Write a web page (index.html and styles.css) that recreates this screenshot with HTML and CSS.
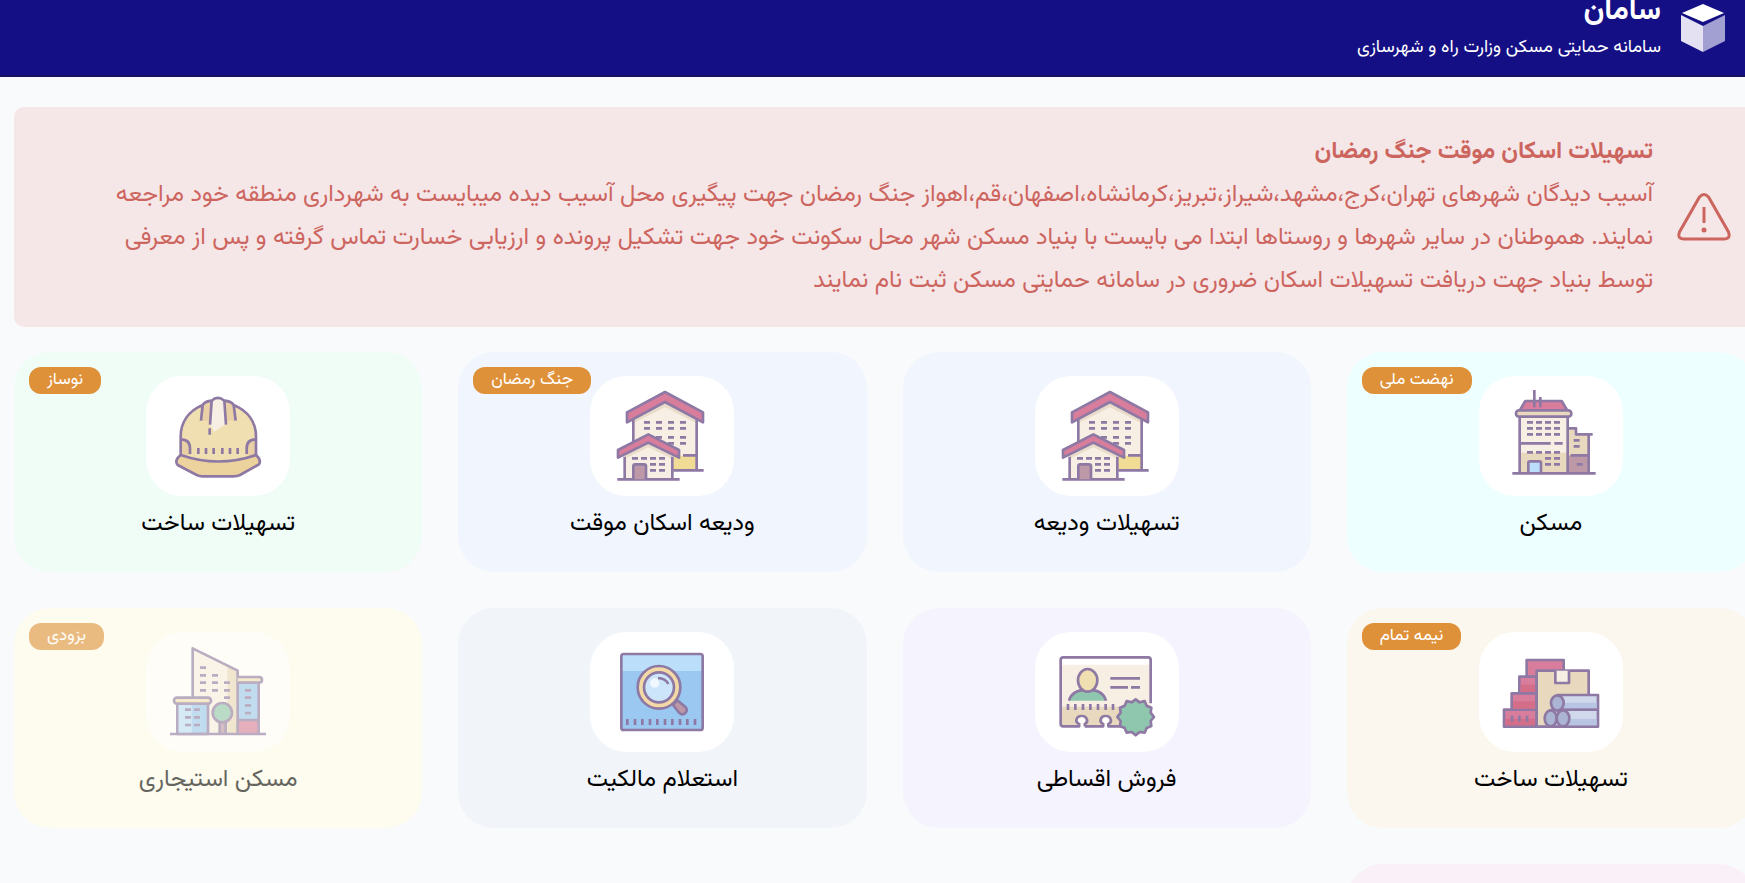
FILE: index.html
```html
<!DOCTYPE html>
<html lang="fa" dir="rtl">
<head>
  <meta charset="UTF-8">
  <meta name="viewport" content="width=device-width, initial-scale=1.0">
  <title>سامان</title>
  <link rel="stylesheet" href="styles.css">
</head>
<body>
  <header class="site-header">
    <svg class="logo" viewBox="0 0 44 48" aria-hidden="true">
      <path d="M22 0 43 9 22 18 1 9z" fill="#fff"/>
      <path d="M0 11 22 22V48L0 37z" fill="#e4e2f2"/>
      <path d="M44 11 22 22V48L44 37z" fill="#a29fd2"/>
    </svg>
    <div class="brand">
      <h1>سامان</h1>
      <p>سامانه حمایتی مسکن وزارت راه و شهرسازی</p>
    </div>
  </header>

  <main>
    <section class="notice">
      <svg class="notice-icon" viewBox="0 0 54 48" aria-hidden="true">
        <path d="M22.500 4Q27-1 31.500 4L51.500 39Q54 46 47 46H7Q0 46 2.500 39z" fill="none" stroke="currentColor" stroke-width="3"/>
        <path d="M27 14V30" stroke="currentColor" stroke-width="3"/>
        <circle cx="27" cy="37" r="2.500" fill="currentColor"/>
      </svg>
      <div class="notice-text">
        <h2>تسهیلات اسکان موقت جنگ رمضان</h2>
        <p>آسیب دیدگان شهرهای تهران،کرج،مشهد،شیراز،تبریز،کرمانشاه،اصفهان،قم،اهواز جنگ رمضان جهت پیگیری محل آسیب دیده میبایست به شهرداری منطقه خود مراجعه<br>
        نمایند. هموطنان در سایر شهرها و روستاها ابتدا می بایست با بنیاد مسکن شهر محل سکونت خود جهت تشکیل پرونده و ارزیابی خسارت تماس گرفته و پس از معرفی<br>
        توسط بنیاد جهت دریافت تسهیلات اسکان ضروری در سامانه حمایتی مسکن ثبت نام نمایند</p>
      </div>
    </section>

    <section class="services">
      <a class="card cyan" href="#">
        <span class="badge">نهضت ملی</span>
        <svg class="card-icon" viewBox="402 108 432 360" aria-hidden="true">
          <path class="cream" d="M524 230H668V400H524z"/>
          <path class="beige" d="M524 338H668V400H524zM668 265H693V283H731V346H668z"/>
          <path class="mauve" d="M668 346H731V400H668z"/>
          <path class="pink" d="M525 210 541 183H650L666 210z"/>
          <rect class="beige" x="513" y="211" width="166" height="19" rx="9"/>
          <path class="sky" d="M550 400V368Q550 364 555 364H583Q588 364 588 368V400z"/>
          <path class="line" d="M525 210 541 183H650L666 210M524 230V400M668 230V400M668 265H693V283H743M731 283V400M677 346H731M524 310H617M628 310H653M502 400H752M568 150V202M586 171V202"/>
          <rect class="line" x="513" y="211" width="166" height="19" rx="9"/>
          <path class="line" d="M550 400V368Q550 364 555 364H583Q588 364 588 368V400"/>
          <path class="line" d="M546 247h18m9 0h18m9 0h18m9 0h18M546 265h18m9 0h18m9 0h18m9 0h18M546 283h18m9 0h18m9 0h18m9 0h18M546 337h18m9 0h18m9 0h18m9 0h18M600 355h18m9 0h18M600 373h18m9 0h18M686 301h18M686 319h18M695 373h18"/>
        </svg>
        <h3>مسکن</h3>
      </a>

      <a class="card blue" href="#">
        <svg class="card-icon" viewBox="45 48 432 360" aria-hidden="true">
          <g id="houses">
            <path class="cream" d="M175 175 270 126 365 175V331H175z"/>
            <path class="shade" d="M175 175 270 126 365 175V190L270 142 175 190z"/>
            <path class="yellow" d="M295 287H365V331H295z"/>
            <path class="pink" d="M156 157 270 96 384 157V187L270 126 156 187z"/>
            <path class="line" d="M156 157 270 96 384 157V187L270 126 156 187zM175 180V250M365 180V331M324 286H365M295 331H386"/>
            <path class="line" d="M207 187h18m18 0h18m18 0h18m18 0h18M207 205h18m18 0h18m18 0h18m18 0h18M243 232h18m18 0h18m18 0h18M279 250h18m18 0h18"/>
            <path class="cream" d="M149 285 220 246 292 285V358H149z"/>
            <path class="shade" d="M149 285 220 250 292 285V296L220 262 149 296z"/>
            <path class="pink" d="M129 270 220 223 312 270V293L220 248 129 293z"/>
            <path class="line" d="M129 270 220 223 312 270V293L220 248 129 293zM149 290V358M292 290V358M127 358H314"/>
            <path class="line mauve" d="M175 358V319Q175 313 181 313H207Q213 313 213 319V358"/>
            <path class="line" d="M171 295h18m9 0h18m9 0h18m9 0h18M225 313h18m9 0h18M225 331h18m9 0h18"/>
          </g>
        </svg>
        <h3>تسهیلات ودیعه</h3>
      </a>

      <a class="card blue" href="#">
        <span class="badge">جنگ رمضان</span>
        <svg class="card-icon" viewBox="45 48 432 360" aria-hidden="true">
          <use href="#houses"/>
        </svg>
        <h3>ودیعه اسکان موقت</h3>
      </a>

      <a class="card green" href="#">
        <span class="badge">نوساز</span>
        <svg class="card-icon" viewBox="438 108 432 360" aria-hidden="true">
          <path class="straw" d="M542 345V290C542 245 568 212 608 195Q615 184 635 182Q653 165 673 182Q694 184 701 195C742 212 768 245 768 290V345Q655 385 542 345z"/>
          <path class="tan" d="M608 195Q615 184 635 182L630 242H603zM673 182Q694 184 701 195L707 242H678z"/>
          <path class="cream" d="M635 182Q653 165 673 182L678 252 643 275 630 252z"/>
          <path class="tan" d="M542 298Q570 298 570 325V345H542zM768 298Q740 298 740 325V345H768z"/>
          <path class="line straw-dark" d="M542 345Q655 384 768 345Q785 360 777 373L720 405Q712 409 700 409H608Q598 409 590 405L533 375Q522 361 542 345z"/>
          <path class="line" d="M542 345V290C542 245 568 212 608 195Q615 184 635 182Q653 165 673 182Q694 184 701 195C742 212 768 245 768 290V345M608 195 603 242M635 182 630 254M673 182 678 254M701 195 707 242M542 298Q570 298 570 325V342M768 298Q740 298 740 325V342"/>
          <path class="line" d="M629 265v19M595 324v18M618 324v18M641 324v18M667 324v18M690 324v18M713 324v18"/>
        </svg>
        <h3>تسهیلات ساخت</h3>
      </a>

      <a class="card sand" href="#">
        <span class="badge">نیمه تمام</span>
        <svg class="card-icon" viewBox="417 96 432 360" aria-hidden="true">
          <path class="line pink" d="M560 228V180H671V228M538 278V230H590V278M515 328V280H590V328M492 380V329H590V380z"/>
          <path class="red" d="M542 254H586V276H542zM519 304H586V326H519zM496 356H586V376H496z"/>
          <path class="line beige" d="M590 212H746V380H590z"/>
          <path class="line cream" d="M646 212V249H687V212"/>
          <path class="line steel" d="M652 285H774V380H632V330H652z"/>
          <path class="steel-dark" d="M668 308H770V325H668zM685 357H770V376H685z"/>
          <path class="line" d="M652 329H774"/>
          <ellipse class="line steel-end" cx="652" cy="309" rx="19" ry="23"/>
          <ellipse class="line steel-end" cx="632" cy="355" rx="18" ry="24"/>
          <ellipse class="line steel-end" cx="669" cy="355" rx="19" ry="24"/>
          <path class="line" d="M516 347v18M538 347v18M561 347v18"/>
        </svg>
        <h3>تسهیلات ساخت</h3>
      </a>

      <a class="card violet" href="#">
        <svg class="card-icon" viewBox="45 66 432 360" aria-hidden="true">
          <rect class="cream" x="122" y="142" width="270" height="207" rx="7"/>
          <path class="beige" d="M122 290H392V349H122z"/>
          <path class="white" d="M126 146H388V164H126z"/>
          <path class="line" d="M194 349V342C207 337 202 318 185 318C168 318 163 337 178 342V349H130Q122 349 122 341V150Q122 142 130 142H384Q392 142 392 150V280M194 349H250V342C236 337 240 318 257 318C274 318 278 337 265 342V349H310"/>
          <path class="white" d="M182 353V340C168 335 175 322 185 322C197 322 200 335 190 340V353zM254 353V340C242 335 247 322 257 322C268 322 273 335 261 340V353z"/>
          <path class="line green-fill" d="M147 272C153 250 173 239 203 239C232 239 252 250 258 272"/>
          <ellipse class="line straw" cx="203" cy="211" rx="29" ry="34"/>
          <path class="line" d="M271 205H360M271 232H324M333 232H360M144 282v18M166 282v18M189 282v18M211 282v18M234 282v18M257 282v18M279 282v18"/>
          <path class="line green-fill" d="M347 268 359 277 374 273 380 287 394 293 392 308 402 321 392 333 394 348 380 354 374 368 359 366 347 376 335 366 320 368 314 354 300 348 302 333 292 321 302 308 300 293 314 287 320 273 335 277z"/>
        </svg>
        <h3>فروش اقساطی</h3>
      </a>

      <a class="card gray" href="#">
        <svg class="card-icon" viewBox="60 66 432 360" aria-hidden="true">
          <rect class="azure" x="154" y="132" width="244" height="228" rx="7"/>
          <path class="sky" d="M156 134H396V183H156z"/>
          <rect class="line" x="154" y="132" width="244" height="228" rx="7"/>
          <path class="line mauve" d="M309 285 322 271 347 292Q354 302 346 309Q338 317 328 309z"/>
          <circle class="line gold" cx="267" cy="232" r="64"/>
          <circle class="line lens" cx="267" cy="232" r="45"/>
          <circle class="white" cx="254" cy="219" r="14" opacity=".7"/>
          <path class="line" d="M264 204Q286 205 295 222M172 327v18M195 327v18M217 327v18M240 327v18M262 327v18M285 327v18M307 327v18M330 327v18M352 327v18M375 327v18"/>
        </svg>
        <h3>استعلام مالکیت</h3>
      </a>

      <a class="card yellow-bg soon" href="#">
        <span class="badge">بزودی</span>
        <svg class="card-icon" viewBox="438 96 432 360" aria-hidden="true">
          <path class="cream" d="M578 145 713 212V402H578z"/>
          <path class="beige" d="M682 196 713 212V402H682z"/>
          <path class="azure" d="M713 248H776V360H713z"/>
          <path class="pink" d="M713 360H776V402H713z"/>
          <path class="line" d="M578 292V145L713 212V402M776 248V402M713 360H776"/>
          <path class="line straw" d="M713 231H777Q786 231 786 240Q786 248 777 248H713"/>
          <path class="line azure" d="M532 311H624V402H532z"/>
          <path class="sky" d="M536 315H575V398H536z"/>
          <rect class="line straw" x="522" y="293" width="111" height="18" rx="9"/>
          <path class="line mauve" d="M659 402V365H677V402"/>
          <circle class="line green-fill" cx="667" cy="338" r="29"/>
          <path class="line" d="M510 402H798M600 203h18M600 226h18m18 0h18M600 248h18m18 0h18m18 0h18M600 271h18m18 0h18m18 0h18M672 293h18M735 271h18M735 293h18M735 316h18M735 339h18M555 329h18m9 0h18M555 352h18m9 0h18M555 375h18m9 0h18"/>
        </svg>
        <h3>مسکن استیجاری</h3>
      </a>

      <a class="card rose" href="#"></a>
    </section>
  </main>
</body>
</html>
```
FILE: styles.css
```css
* {
  box-sizing: border-box;
}

body {
  margin: 0;
  height: 100vh;
  overflow: hidden;
  background-color: #f9fafc;
  font-family: Vazirmatn, "Noto Sans Arabic", "DejaVu Sans", sans-serif;
  color: #000;
}

h1, h2, h3, p {
  margin: 0;
}

/* Header */
.site-header {
  display: flex;
  align-items: flex-start;
  gap: 20px;
  height: 77px;
  padding: 4px 20px 0;
  background-color: #140f85;
  border-bottom: 2px solid #17125f;
  color: #fff;
}

.logo {
  width: 44px;
  height: 48px;
}

.brand {
  margin-top: -10px;
}

.brand h1 {
  font-size: 30px;
  line-height: 36px;
}

.brand p {
  font-size: 18px;
  line-height: 36px;
}

/* The content runs past the right edge of the window */
main {
  margin-right: -10px;
  padding: 30px 0 0 14px;
}

.notice {
  display: flex;
  align-items: center;
  gap: 24px;
  margin-bottom: 25px;
  padding: 24px;
  border-radius: 10px;
  background-color: #f5e7e8;
  color: #cd655f;
}

.notice-icon {
  flex: none;
  width: 54px;
  height: 48px;
}

.notice-text {
  font-size: 24px;
  line-height: 43px;
  white-space: nowrap;
}

.notice-text h2 {
  font-size: 24px;
}

/* Cards */
.services {
  display: grid;
  grid-template-columns: repeat(4, 1fr);
  grid-auto-rows: 220px;
  gap: 36px;
}

.card {
  position: relative;
  display: flex;
  flex-direction: column;
  align-items: center;
  padding-top: 24px;
  border-radius: 36px;
  color: #000;
  text-decoration: none;
}

.card h3 {
  margin-top: 8px;
  font-size: 24px;
  font-weight: 400;
  line-height: 40px;
}

.card-icon {
  width: 144px;
  height: 120px;
  border-radius: 36px;
  background-color: #fff;
}

.badge {
  position: absolute;
  top: 15px;
  left: 15px;
  padding: 0 18px;
  border-radius: 12px;
  background-color: #df9139;
  color: #fff;
  font-size: 17px;
  line-height: 27px;
}

.cyan { background-color: #eeffff; }
.blue { background-color: #f0f5fe; }
.green { background-color: #effdf6; }
.sand { background-color: #fbf7ee; }
.violet { background-color: #f4f3fe; }
.gray { background-color: #f1f5fa; }
.yellow-bg { background-color: #fdfcee; }
.rose { background-color: #f9f0f8; }

.soon > * {
  opacity: 0.6;
}

/* Icon strokes and fills */
.line {
  fill: none;
  stroke: #8e78a4;
  stroke-width: 8;
  stroke-linejoin: round;
}

.white { fill: #fff; }
.cream { fill: #f7efe4; }
.shade { fill: #e9dccb; }
.beige { fill: #e8d8bd; }
.straw { fill: #f0dfb1; }
.straw-dark { fill: #ecd29d; }
.tan { fill: #ead0a5; }
.gold { fill: #f3d9a6; }
.yellow { fill: #f0dc94; }
.pink { fill: #d87d9c; }
.red { fill: #d46d87; }
.mauve { fill: #bd98a6; }
.sky { fill: #bbdffa; }
.azure { fill: #9bc8f0; }
.lens { fill: #cde5fa; }
.steel { fill: #d0d8ec; }
.steel-dark { fill: #b7c4e2; }
.steel-end { fill: #abb5d3; }
.green-fill { fill: #8fc7ae; }
```
